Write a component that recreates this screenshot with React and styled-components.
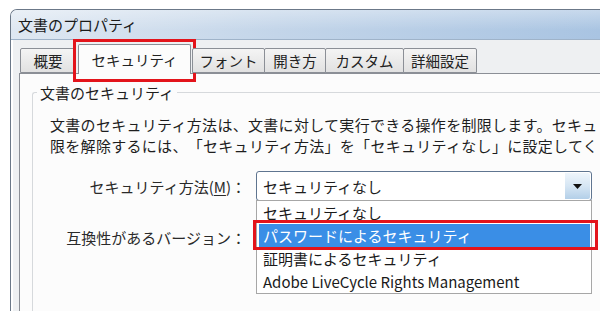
import React from 'react';
import styled, { createGlobalStyle } from 'styled-components';

const GlobalStyle = createGlobalStyle`
  html, body {
    margin: 0;
    padding: 0;
    background: #ffffff;
    width: 600px;
    height: 311px;
    overflow: hidden;
  }
  body {
    font-family: "Noto Sans CJK JP", "Noto Sans", sans-serif;
    color: #1e1e1e;
    text-spacing-trim: space-all;
  }
`;

const Window = styled.div`
  margin: 9px 0 0 10px;
  height: 320px;
  border: 1px solid #6b7888;
  border-right: none;
  border-bottom: none;
  border-top-left-radius: 7px;
  background: #eef0f2;
  overflow: hidden;
  display: flex;
  flex-direction: column;
`;

const TitleBar = styled.div`
  height: 29px;
  flex-shrink: 0;
  display: flex;
  align-items: center;
  padding-left: 7px;
  font-size: 15px;
  color: #1a1a1a;
  background:
    linear-gradient(to bottom, rgba(255, 255, 255, 0.35), rgba(255, 255, 255, 0) 70%),
    linear-gradient(to right, #dfe8f2 0%, #c3d5e9 45%, #a9c4e2 100%);
  border-bottom: 1px solid #9fb3c9;
`;

const Frame = styled.div`
  flex: 1;
  display: flex;
  flex-direction: column;
  padding-left: 8px;
  box-shadow: inset 2px 0 0 #ffffff;
`;

const TabStrip = styled.div`
  height: 33px;
  display: flex;
  align-items: flex-end;
  padding-left: 1px;
  flex-shrink: 0;
  position: relative;
  z-index: 1;
`;

const Tab = styled.div`
  box-sizing: border-box;
  width: ${p => p.$w}px;
  height: ${p => (p.$active ? 30 : 25)}px;
  margin-left: ${p => (p.$active ? 3 : 0)}px;
  margin-right: ${p => (p.$active ? 1 : -1)}px;
  margin-bottom: ${p => (p.$active ? -1 : 0)}px;
  border: 1px solid #8b8f96;
  border-bottom: ${p => (p.$active ? 'none' : '1px solid #8b8f96')};
  border-radius: 2px 2px 0 0;
  background: ${p =>
    p.$active ? '#fcfcfc' : 'linear-gradient(to bottom, #f4f4f4, #e1e1e1)'};
  display: flex;
  align-items: center;
  justify-content: center;
  font-size: 14.5px;
  color: #222;
  position: relative;

  ${p =>
    p.$marked &&
    `
    &::after {
      content: '';
      position: absolute;
      left: -6px;
      right: -6px;
      top: -6px;
      bottom: -8px;
      border: 3px solid #e3141b;
      box-sizing: border-box;
    }
  `}
`;

const Panel = styled.div`
  flex: 1;
  background: #fcfcfc;
  border-top: 1px solid #8b8f96;
  border-left: 1px solid #8b8f96;
  padding: 8px 0 0 12px;
`;

const GroupBox = styled.fieldset`
  margin: 0;
  height: 400px;
  padding: 0 0 0 17px;
  border: 1px solid #d6d9dc;
  border-right: none;
  border-radius: 3px 0 0 0;
  min-width: 0;
`;

const Legend = styled.legend`
  margin-left: -13px;
  padding: 0 3px;
  font-size: 15px;
  line-height: 21px;
  color: #1e1e1e;
`;

const Description = styled.p`
  margin: 11px 0 0;
  font-size: 15px;
  line-height: 21px;
  letter-spacing: 0.3px;
  white-space: nowrap;
  color: #1e1e1e;
`;

const Form = styled.div`
  margin-top: 15px;
  display: grid;
  grid-template-columns: 196px 336px;
  column-gap: 10px;
  row-gap: 21px;
  align-items: center;
`;

const Label = styled.label`
  justify-self: end;
  font-size: 15px;
  color: #2a2a2a;
  white-space: nowrap;

  u {
    text-decoration: underline;
    text-underline-offset: 2px;
  }
`;

const SelectBox = styled.div`
  position: relative;
  box-sizing: border-box;
  height: 30px;
  border: 1px solid #5f7590;
  border-radius: 3px;
  background: #ffffff;
  display: flex;
  align-items: center;
  font-size: 15px;
  padding-left: 6px;
`;

const SelectText = styled.span`
  flex: 1;
`;

const ArrowButton = styled.div`
  width: 25px;
  align-self: stretch;
  margin: 1px;
  border-radius: 0 2px 2px 0;
  background: linear-gradient(to bottom, #eef5fb 0%, #d6e6f4 50%, #b3cfe8 100%);
  display: flex;
  align-items: center;
  justify-content: center;
`;

const List = styled.div`
  position: absolute;
  top: 28px;
  left: -1px;
  right: -1px;
  box-sizing: border-box;
  background: #ffffff;
  border: 1px solid #a7a7a7;
  padding: 0 1px 0 2px;
  z-index: 2;
`;

const Item = styled.div`
  height: 23px;
  display: flex;
  align-items: center;
  padding-left: 4px;
  font-size: 15px;
  white-space: nowrap;
  position: relative;
  background: ${p => (p.$selected ? '#3a8ee6' : 'transparent')};
  color: ${p => (p.$selected ? '#ffffff' : '#1a1a1a')};

  ${p =>
    p.$selected &&
    `
    &::after {
      content: '';
      position: absolute;
      left: -6px;
      right: -8px;
      top: -4px;
      bottom: -3px;
      border: 3px solid #e3141b;
      box-sizing: border-box;
    }
  `}
`;

const Caret = () => (
  <svg width="9" height="5" viewBox="0 0 9 5">
    <path d="M0 0H9L4.5 5Z" fill="#111" />
  </svg>
);

const tabs = [
  { label: '概要', w: 56 },
  { label: 'セキュリティ', w: 113, active: true },
  { label: 'フォント', w: 73 },
  { label: '開き方', w: 62 },
  { label: 'カスタム', w: 79 },
  { label: '詳細設定', w: 74 },
];

const options = [
  'セキュリティなし',
  'パスワードによるセキュリティ',
  '証明書によるセキュリティ',
  'Adobe LiveCycle Rights Management',
];

export default function App() {
  return (
    <>
      <GlobalStyle />
      <Window>
        <TitleBar>文書のプロパティ</TitleBar>
        <Frame>
          <TabStrip>
            {tabs.map(t => (
              <Tab key={t.label} $w={t.w} $active={t.active} $marked={t.active}>
                {t.label}
              </Tab>
            ))}
          </TabStrip>
          <Panel>
            <GroupBox>
              <Legend>文書のセキュリティ</Legend>
              <Description>
                文書のセキュリティ方法は、文書に対して実行できる操作を制限します。セキュ
                <br />
                限を解除するには、「セキュリティ方法」を「セキュリティなし」に設定してく
              </Description>
              <Form>
                <Label>
                  セキュリティ方法(<u>M</u>)：
                </Label>
                <SelectBox>
                  <SelectText>セキュリティなし</SelectText>
                  <ArrowButton>
                    <Caret />
                  </ArrowButton>
                  <List>
                    {options.map((o, i) => (
                      <Item key={o} $selected={i === 1}>
                        {o}
                      </Item>
                    ))}
                  </List>
                </SelectBox>
                <Label>互換性があるバージョン：</Label>
                <SelectBox />
              </Form>
            </GroupBox>
          </Panel>
        </Frame>
      </Window>
    </>
  );
}
